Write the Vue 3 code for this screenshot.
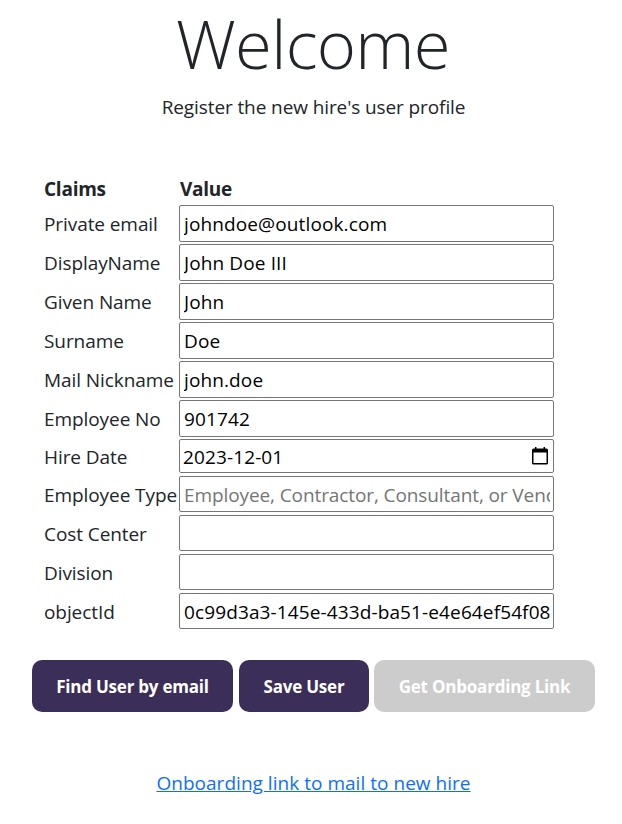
<script setup>
import { reactive } from 'vue'

const fields = reactive([
  { label: 'Private email', value: 'johndoe@outlook.com' },
  { label: 'DisplayName', value: 'John Doe III' },
  { label: 'Given Name', value: 'John' },
  { label: 'Surname', value: 'Doe' },
  { label: 'Mail Nickname', value: 'john.doe' },
  { label: 'Employee No', value: '901742' },
  { label: 'Hire Date', value: '2023-12-01', date: true },
  { label: 'Employee Type', value: '', placeholder: 'Employee, Contractor, Consultant, or Vendor', short: true },
  { label: 'Cost Center', value: '', short: true },
  { label: 'Division', value: '', short: true },
  { label: 'objectId', value: '0c99d3a3-145e-433d-ba51-e4e64ef54f08', short: true },
])
</script>

<template>
  <main class="page">
    <h1 class="title">Welcome</h1>
    <p class="subtitle">Register the new hire's user profile</p>

    <div class="form">
      <div class="row head">
        <span>Claims</span>
        <span class="value-head">Value</span>
      </div>
      <label
        v-for="f in fields"
        :key="f.label"
        class="row"
        :class="{ date: f.date, short: f.short }"
      >
        <span class="name">{{ f.label }}</span>
        <span class="field">
          <input v-model="f.value" type="text" :placeholder="f.placeholder" />
          <svg v-if="f.date" class="calendar" viewBox="0 0 16 18" width="16" height="18">
            <path
              fill="#000"
              fill-rule="evenodd"
              d="M3 0h1.500v1.500h7V0H13v1.500h1.500A1.500 1.500 0 0 1 16 3v13a1.500 1.500 0 0 1-1.500 1.500h-13A1.500 1.500 0 0 1 0 16V3a1.500 1.500 0 0 1 1.500-1.500H3zM1.500 5.500v10.500h13V5.500z"
            />
          </svg>
        </span>
      </label>
    </div>

    <div class="actions">
      <button class="btn find" type="button">Find User by email</button>
      <button class="btn save" type="button">Save User</button>
      <button class="btn link" type="button" disabled>Get Onboarding Link</button>
    </div>

    <p class="footer"><a href="#">Onboarding link to mail to new hire</a></p>
  </main>
</template>

<style>
body {
  background: #fff;
}
</style>

<style scoped>
.page {
  box-sizing: border-box;
  width: 622px;
  height: 824px;
  font-family: 'Open Sans', 'Noto Sans', sans-serif;
  font-size: 19px;
  line-height: 30px;
  color: #212529;
}
.title {
  margin: 0;
  padding-left: 4px;
  height: 92px;
  font-size: 67px;
  font-weight: 300;
  line-height: 86px;
  text-align: center;
  letter-spacing: -0.7px;
}
.subtitle {
  margin: 0;
  padding-left: 5px;
  text-align: center;
  letter-spacing: -0.1px;
}
.form {
  display: flex;
  flex-direction: column;
  gap: 2px;
  margin: 52px 0 0 44px;
  width: 510px;
}
.row {
  display: grid;
  grid-template-columns: 135px 375px;
  height: 37px;
  align-items: center;
}
.row.head {
  height: 29px;
  font-weight: 700;
  letter-spacing: -0.25px;
}
.value-head {
  padding-left: 1px;
}
.row.date {
  height: 34px;
  margin-bottom: 1px;
}
.row.short {
  height: 36px;
  margin-bottom: 1px;
}
.name {
  white-space: nowrap;
  letter-spacing: -0.08px;
}
.date .name,
.short .name {
  padding-top: 2px;
}
.field {
  box-sizing: border-box;
  display: flex;
  align-items: center;
  height: 100%;
  padding: 0 3px 0 4px;
  border: 1px solid #767676;
  border-radius: 2px;
  background: #fff;
}
.field input {
  flex: 1;
  min-width: 0;
  padding: 0;
  border: 0;
  outline: 0;
  background: transparent;
  font: inherit;
  letter-spacing: 0.12px;
  color: #000;
}
.date .field input,
.short .field input {
  padding-top: 2px;
}
.field input::placeholder {
  color: #757575;
  opacity: 1;
  letter-spacing: -0.1px;
}
.date .field {
  padding: 0 5px 0 3px;
}
.actions {
  display: flex;
  gap: 6px;
  margin: 30px 0 0 32px;
}
.btn {
  height: 52px;
  padding: 0;
  border: 0;
  border-radius: 10px;
  background: #3b2e58;
  color: #fff;
  font: 700 17px 'Open Sans', 'Noto Sans', sans-serif;
  letter-spacing: -0.22px;
  white-space: nowrap;
}
.find {
  width: 201px;
}
.save {
  width: 130px;
}
.link {
  width: 221px;
  margin-left: -1px;
  background: #ccc;
}
.footer {
  margin: 56px 0 0;
  padding-left: 5px;
  text-align: center;
  letter-spacing: 0.03px;
}
.footer a {
  color: #0d6efd;
  text-decoration: underline;
}
</style>
